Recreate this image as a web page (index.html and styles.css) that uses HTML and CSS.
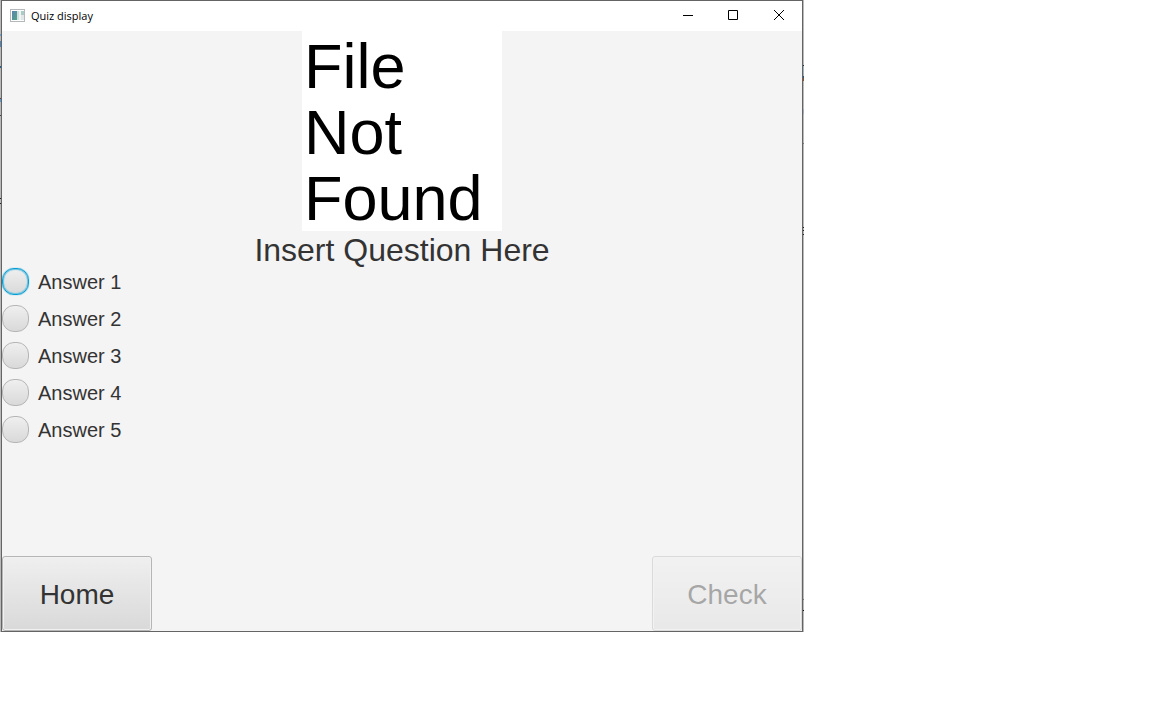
FILE: index.html
```html
<!DOCTYPE html>
<html lang="en">
<head>
<meta charset="utf-8">
<title>Quiz display</title>
<link rel="stylesheet" href="styles.css">
</head>
<body>
<div class="desktop">
  <div class="window">
    <header class="titlebar">
      <svg class="app-icon" width="16" height="14" viewBox="0 0 16 14" aria-hidden="true">
        <defs>
          <linearGradient id="pane" x1="0" y1="0" x2="1" y2="1">
            <stop offset="0" stop-color="#5b84b0"/>
            <stop offset="1" stop-color="#54a586"/>
          </linearGradient>
        </defs>
        <rect x="0.5" y="0.5" width="14" height="12" fill="#fff" stroke="#b4b8bb"/>
        <rect x="2" y="2" width="5" height="9" fill="url(#pane)"/>
        <rect x="7" y="2" width="2" height="9" fill="#cfe0df"/>
        <rect x="9" y="2" width="2" height="9" fill="#f0f2f3"/>
        <rect x="11" y="2" width="3" height="4" fill="#a9cdc4"/>
        <rect x="11" y="6" width="3" height="5" fill="#dfe7e7"/>
      </svg>
      <h1 class="title">Quiz display</h1>
      <div class="window-controls">
        <button class="window-button" type="button" aria-label="Minimize">
          <svg width="12" height="12" viewBox="0 0 12 12"><path d="M2 5.500h10"/></svg>
        </button>
        <button class="window-button" type="button" aria-label="Maximize">
          <svg width="12" height="12" viewBox="0 0 12 12"><path d="M1.500 .5h9v9h-9z"/></svg>
        </button>
        <button class="window-button" type="button" aria-label="Close">
          <svg width="12" height="12" viewBox="0 0 12 12"><path d="M1 0l10 10M11 0L1 10"/></svg>
        </button>
      </div>
    </header>
    <main>
      <form class="quiz">
        <div class="picture">File<br>Not<br>Found</div>
        <h2 class="question" id="question">Insert Question Here</h2>
        <div class="answers" role="radiogroup" aria-labelledby="question">
          <label class="answer"><input class="radio radio-focused" type="radio" name="answer" value="1"><span class="answer-text">Answer 1</span></label>
          <label class="answer"><input class="radio" type="radio" name="answer" value="2"><span class="answer-text">Answer 2</span></label>
          <label class="answer"><input class="radio" type="radio" name="answer" value="3"><span class="answer-text">Answer 3</span></label>
          <label class="answer"><input class="radio" type="radio" name="answer" value="4"><span class="answer-text">Answer 4</span></label>
          <label class="answer"><input class="radio" type="radio" name="answer" value="5"><span class="answer-text">Answer 5</span></label>
        </div>
        <div class="actions">
          <button class="action" type="button">Home</button>
          <button class="action" type="submit" disabled>Check</button>
        </div>
      </form>
    </main>
  </div>
</div>
</body>
</html>
```
FILE: styles.css
```css
* {
  box-sizing: border-box;
}

body {
  margin: 0;
  background: #fff;
  color: #333;
  font-family: "Liberation Sans", Arial, sans-serif;
}

/* Slivers of the windows behind show along both sides. */
.desktop {
  max-width: 804px;
  padding: 0 1px;
  background:
    linear-gradient(#b9b9b9 34px, #6fa0c8 34px 36px, #b9b9b9 36px 41px, #4f86b4 41px 47px, #b9b9b9 47px 66px, #2a5f8c 66px 68px, #b9b9b9 68px 98px, #5a4a50 98px 99px, #5b9bd0 99px 102px, #b9b9b9 102px 115px, #444 115px 116px, #b9b9b9 116px 198px, #222 198px 199px, #b9b9b9 199px 203px, #222 203px 204px, #b9b9b9 204px) left / 1px 100% no-repeat,
    linear-gradient(#b9b9b9 65px, #1c3038 65px 66px, #9fb4bd 66px 76px, #30557a 76px 78px, #8c5030 78px 81px, #b9b9b9 81px 109px, #a3a9b6 109px 114px, #b9b9b9 114px 143px, #777 143px 144px, #b9b9b9 144px 227px, #222 227px 228px, #b9b9b9 228px 230px, #222 230px 231px, #b9b9b9 231px 234px, #222 234px 235px, #b9b9b9 235px 599px, #777 599px 600px, #b9b9b9 600px 610px, #111 610px 611px, #b9b9b9 611px) right / 1px 100% no-repeat;
}

.window {
  border: 1px solid #646464;
  background: #f4f4f4;
}

.titlebar {
  display: flex;
  align-items: center;
  height: 30px;
  padding-left: 8px;
  background: #fff;
}

.title {
  margin: 0 auto 0 5px;
  color: #000;
  font: 11px/16px "Open Sans", "Noto Sans", sans-serif;
}

.window-controls {
  display: flex;
}

.window-button {
  display: grid;
  place-items: center;
  width: 46px;
  height: 30px;
  padding: 0;
  border: 0;
  background: none;
}

.window-button svg {
  fill: none;
  stroke: #000;
}

.quiz {
  display: flex;
  flex-direction: column;
}

.picture {
  align-self: center;
  width: 200px;
  padding: 2px 2px 0;
  background: #fff;
  color: #000;
  font-size: 63px;
  line-height: 66px;
}

.question {
  margin: 0;
  padding-top: 2px;
  font-size: 32px;
  font-weight: 400;
  line-height: 35px;
  text-align: center;
}

.answers {
  display: flex;
  flex-direction: column;
  align-items: flex-start;
  gap: 10px;
}

.answer {
  display: flex;
  align-items: center;
  gap: 9px;
  font-size: 20px;
  line-height: 25px;
}

.answer-text {
  padding-top: 2px;
}

.radio {
  appearance: none;
  width: 27px;
  height: 27px;
  margin: 0;
  border: 1px solid #b5b5b5;
  border-radius: 12px;
  background: linear-gradient(#efefef, #d9d9d9);
}

.radio-focused {
  border-color: #039ed3;
  box-shadow: 0 0 1px #039ed3, inset 0 0 1px 1px #6dc3e2;
}

.actions {
  display: flex;
  justify-content: space-between;
  margin-top: 113px;
}

.action {
  width: 150px;
  height: 75px;
  padding: 2px 0 0;
  border: 1px solid #b5b5b5;
  border-radius: 3px;
  background: linear-gradient(#efefef, #d9d9d9);
  box-shadow: inset 0 0 0 1px #f1f1f1;
  color: #333;
  font: 28px/32px "Liberation Sans", Arial, sans-serif;
}

.action:disabled {
  opacity: 0.4;
}
```
